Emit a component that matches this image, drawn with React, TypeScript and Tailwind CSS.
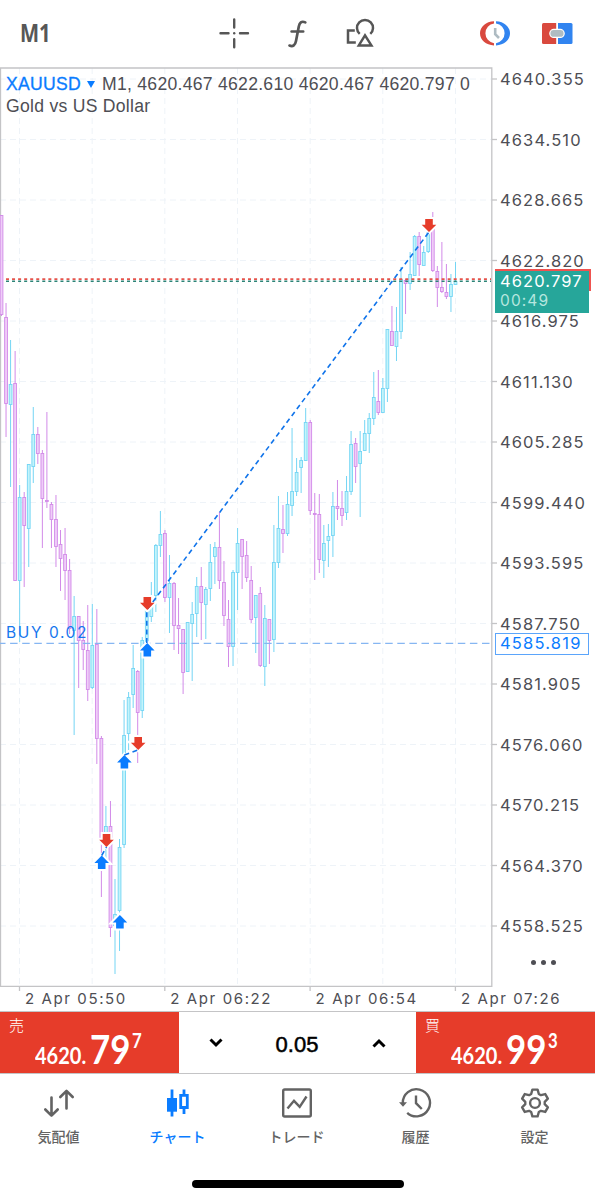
import { ReactNode } from "react";

type Candle = ["u" | "d", number, number, number, number];

// direction, high, body top, body bottom, low
const candles: Candle[] = [
  ["d", 215, 215, 314, 316], ["d", 303, 317, 403, 437], ["u", 340, 384, 404, 487], ["d", 351, 383, 580, 581],
  ["u", 485, 497, 580, 642], ["d", 492, 497, 525, 587], ["u", 464, 464, 528, 567], ["u", 407, 434, 466, 483],
  ["d", 427, 434, 453, 464], ["d", 450, 453, 498, 548], ["d", 412, 500, 501, 508], ["d", 502, 504, 519, 548],
  ["d", 495, 519, 546, 567], ["d", 530, 544, 558, 591], ["d", 528, 554, 570, 600], ["d", 559, 570, 628, 634],
  ["u", 596, 616, 630, 735], ["d", 616, 616, 640, 688], ["d", 621, 640, 649, 670], ["d", 605, 650, 689, 701],
  ["u", 604, 645, 687, 689], ["d", 609, 644, 738, 764], ["d", 736, 738, 842, 897], ["u", 806, 826, 840, 858],
  ["d", 801, 826, 927, 937], ["u", 879, 914, 925, 974], ["u", 839, 847, 910, 951], ["u", 700, 735, 844, 848],
  ["u", 692, 697, 733, 750], ["u", 645, 668, 694, 708], ["d", 670, 671, 712, 763], ["u", 637, 640, 710, 718],
  ["u", 606, 609, 641, 643], ["u", 582, 606, 616, 622], ["u", 544, 545, 595, 612], ["u", 511, 534, 545, 557],
  ["d", 530, 533, 597, 602], ["u", 555, 583, 597, 633], ["d", 582, 583, 625, 650], ["d", 598, 625, 628, 654],
  ["d", 629, 629, 672, 694], ["u", 622, 622, 671, 671], ["u", 602, 614, 623, 681], ["u", 577, 586, 613, 637],
  ["d", 567, 586, 602, 640], ["u", 587, 589, 604, 639], ["u", 544, 562, 588, 601], ["u", 542, 547, 556, 584],
  ["d", 512, 547, 580, 589], ["d", 561, 582, 615, 626], ["d", 600, 619, 646, 667], ["u", 570, 572, 646, 666],
  ["u", 528, 543, 572, 610], ["d", 539, 539, 556, 589], ["d", 541, 555, 577, 582], ["d", 566, 580, 619, 623],
  ["u", 595, 595, 617, 653], ["d", 587, 593, 665, 667], ["u", 605, 618, 666, 686], ["d", 619, 619, 640, 664],
  ["u", 525, 562, 639, 652], ["u", 496, 528, 562, 568], ["d", 505, 529, 533, 553], ["u", 492, 504, 533, 536],
  ["u", 428, 491, 505, 516], ["u", 458, 472, 491, 496], ["u", 457, 460, 467, 493], ["u", 408, 422, 460, 461],
  ["d", 420, 422, 510, 515], ["d", 493, 513, 514, 580], ["d", 494, 514, 559, 573], ["u", 525, 543, 560, 578],
  ["u", 524, 536, 540, 567], ["u", 492, 506, 535, 557], ["d", 480, 506, 508, 520], ["d", 491, 508, 515, 526],
  ["u", 476, 491, 512, 520], ["u", 431, 444, 491, 495], ["d", 438, 443, 466, 483], ["u", 431, 451, 463, 517],
  ["u", 420, 433, 450, 451], ["u", 413, 418, 433, 453], ["u", 372, 397, 418, 425], ["d", 370, 401, 412, 415],
  ["u", 378, 388, 412, 413], ["u", 329, 329, 388, 402], ["d", 306, 331, 345, 346], ["u", 307, 331, 346, 361],
  ["u", 267, 279, 331, 339], ["d", 279, 280, 283, 314], ["u", 252, 274, 283, 290], ["u", 235, 236, 275, 276],
  ["d", 232, 236, 264, 276], ["u", 246, 252, 265, 265], ["u", 226, 226, 251, 253], ["d", 212, 226, 270, 272],
  ["d", 266, 271, 287, 307], ["d", 242, 287, 291, 293], ["d", 264, 292, 296, 299], ["u", 274, 284, 296, 312],
  ["u", 262, 281, 284, 285],
];

const prices = [
  "4640.355", "4634.510", "4628.665", "4622.820", "4616.975", "4611.130", "4605.285", "4599.440",
  "4593.595", "4587.750", "4581.905", "4576.060", "4570.215", "4564.370", "4558.525",
];

const times = ["2 Apr 05:50", "2 Apr 06:22", "2 Apr 06:54", "2 Apr 07:26"];

const sells = [[106.5, 847], [138.2, 750], [147.3, 610], [429, 232]];
const buys = [[101.7, 855.5], [119.9, 915], [124.4, 755], [147.3, 643]];

function Chart() {
  return (
    <svg width="498" height="925" viewBox="0 67 498 925" className="block">
      <g stroke="#eef3f8" strokeWidth="1">
        {prices.map((p, i) => (
          <line key={p} x1="0" x2="491" y1={79 + i * 60.5} y2={79 + i * 60.5} strokeDasharray="6 4" />
        ))}
        {[0, 1, 2, 3, 4, 5, 6].map((i) => (
          <line key={i} x1={19.5 + i * 72.66} x2={19.5 + i * 72.66} y1="68" y2="986" strokeDasharray="6 4" />
        ))}
      </g>
      <g stroke="#c4c4c6" strokeWidth="1.3">
        {prices.map((p, i) => (
          <line key={p} x1="492" x2="497" y1={79 + i * 60.5} y2={79 + i * 60.5} />
        ))}
        {times.map((t, i) => (
          <line key={t} x1={19.5 + i * 145.3} x2={19.5 + i * 145.3} y1="986" y2="991" />
        ))}
        <path d="M0.5 986.3 V68 H491.8 V986.3 Z" fill="none" />
      </g>

      {candles.map(([dir, high, top, bottom, low], i) => {
        const x = 1.5 + i * 4.54;
        const color = dir === "u" ? "#74d5f4" : "#d28ae8";
        return (
          <g key={i} stroke={color}>
            <line x1={x} x2={x} y1={high} y2={low} strokeWidth="1" />
            <rect
              x={x - 1.4}
              y={top + 0.5}
              width="2.8"
              height={Math.max(bottom - top, 0.3)}
              fill={dir === "u" ? "#c3f4fb" : "#efcdf8"}
              strokeWidth="0.9"
            />
          </g>
        );
      })}

      <line x1="0" x2="491" y1="643.4" y2="643.4" stroke="#86b6f2" strokeWidth="1.1" strokeDasharray="7.5 4.6" strokeDashoffset="2" />
      <line x1="6" x2="491" y1="279.2" y2="279.2" stroke="#e5534b" strokeWidth="1.8" strokeDasharray="3 3.05" />
      <line x1="6" x2="491" y1="281.2" y2="281.2" stroke="#2c8376" strokeWidth="1.4" strokeDasharray="3 3.05" />

      <g fill="#fff" stroke="#fff" strokeWidth="4">
        {sells.map(([x, y]) => (
          <path key={x} d={`M${x} ${y} l-7.3 -7.3 h3.5 v-5.7 h7.6 v5.7 h3.5 Z`} />
        ))}
        {buys.map(([x, y]) => (
          <path key={x} d={`M${x} ${y} l-7.3 7.6 h3.5 v6 h7.6 v-6 h3.5 Z`} />
        ))}
      </g>
      <g stroke="#0f73ea" strokeWidth="1.6" strokeDasharray="5 3.6" fill="none">
        <path d="M146.8 643 V610 L429 232" />
        <path d="M124.4 755 L138.2 750" />
        <path d="M101.7 855.5 L106.5 847" />
      </g>
      <g fill="#e63c2a">
        {sells.map(([x, y]) => (
          <path key={x} d={`M${x} ${y} l-7.3 -7.3 h3.5 v-5.7 h7.6 v5.7 h3.5 Z`} />
        ))}
      </g>
      <g fill="#0a7cff">
        {buys.map(([x, y]) => (
          <path key={x} d={`M${x} ${y} l-7.3 7.6 h3.5 v6 h7.6 v-6 h3.5 Z`} />
        ))}
      </g>
    </svg>
  );
}

function Header() {
  return (
    <div className="flex h-[67px] items-start pl-5 font-['Open_Sans',sans-serif]">
      <div className="w-[195px] pt-4 text-[25px] leading-8 font-bold text-[#575757]">
        <span className="inline-block origin-left scale-x-[0.81]">M1</span>
      </div>
      <svg width="380" height="66" viewBox="215 0 380 66" fill="none" className="shrink-0">
        <g stroke="#565656" strokeWidth="2.4" strokeLinecap="round">
          <path d="M220.5 33.3 H228.5 M240 33.3 H248 M234.2 19.5 V27.5 M234.2 39.3 V47.3" />
          <path d="M234.2 33.3 h0.01" />
          <path d="M305.3 22.4 C301.5 20.6 299.5 22.8 298.8 26.5 L296 41 C295.2 45.2 293 47 289.5 45.6 M291.6 31.5 H303.2" strokeWidth="2.7" />
        </g>
        <g stroke="#565656" strokeWidth="2.5">
          <path d="M359.7 33.9 A8 8 0 1 1 370.3 33.9" />
          <path d="M365 35.3 L358.8 45.4 H371.4 Z" />
          <path d="M354.8 30.4 H348 V42.5 H355.8" />
        </g>
        <path d="M494 21.2 C486 21.6 480 26.5 480 33.3 S486 45 494 45.4 V43.2 A10 10 0 0 1 494 23.4 Z" fill="#d9493e" />
        <path d="M496 21.2 C504 21.6 510 26.5 510 33.3 S504 45 496 45.4 V43.2 A10 10 0 0 0 496 23.4 Z" fill="#3184f0" />
        <path d="M495.2 28 V34.2 L499 38" stroke="#aebbc2" strokeWidth="2.6" />
        <path d="M543.5 23 H556.2 V44 H543.5 Q542 44 542 42.5 V24.5 Q542 23 543.5 23 Z" fill="#d9493e" />
        <path d="M558 23 H571 Q572.5 23 572.5 24.5 V42.5 Q572.5 44 571 44 H558 Z" fill="#3184f0" />
        <rect x="549.8" y="29.4" width="14.4" height="8" rx="4" fill="#b0bcc2" stroke="#fff" strokeWidth="1.2" />
      </svg>
    </div>
  );
}

function Quote({ label, big, sup }: { label: string; big: string; sup: string }) {
  return (
    <div className="flex w-[179px] flex-col bg-[#e63c2a] text-white">
      <div className="h-[17px] pt-[5px] pl-[9px] font-['Noto_Sans_CJK_JP',sans-serif] text-[15px] leading-[15px] font-light">{label}</div>
      <div className="flex h-[42px] items-baseline pl-[35px] font-['Lato',sans-serif] leading-[40px] font-bold">
        <div className="w-[55px] text-[23px]">
          <span className="inline-block origin-left scale-x-[0.87]">4620.</span>
        </div>
        <div className="w-[42px] text-[41px]">
          <span className="inline-block origin-left scale-x-[0.85]">{big}</span>
        </div>
        <div className="text-[21px]">
          <span className="relative -top-4 inline-block origin-left scale-x-[0.8]">{sup}</span>
        </div>
      </div>
    </div>
  );
}

function Tab({ label, active, children }: { label: string; active?: boolean; children: ReactNode }) {
  return (
    <div className={active ? "flex w-[119px] flex-col items-center text-[#0a7cff]" : "flex w-[119px] flex-col items-center text-[#636363]"}>
      <svg width="34" height="34" viewBox="-17 -17 34 34" fill="none" stroke="currentColor" strokeWidth="2.4">
        {children}
      </svg>
      <div className="mt-[6px] text-[14px] leading-5 font-medium">{label}</div>
    </div>
  );
}

function gearPath() {
  const pts: string[] = [];
  for (let i = 0; i < 6; i++) {
    for (const [off, r] of [[-23, 9.8], [-13, 13.6], [13, 13.6], [23, 9.8]]) {
      const a = ((i * 60 + (r > 10 ? off * 0.85 : off)) * Math.PI) / 180;
      pts.push(`${(r * Math.sin(a)).toFixed(2)} ${(-r * Math.cos(a)).toFixed(2)}`);
    }
  }
  return `M${pts.join(" L")} Z`;
}

export default function App() {
  return (
    <div className="flex h-[1200px] w-[595px] flex-col overflow-hidden bg-white">
      <Header />

      <div className="relative flex h-[919px] font-['Inter',sans-serif] text-[#4e4e54]">
        <Chart />
        <div className="flex h-[869px] flex-col justify-between pt-[2px] pl-[2px] text-[16.5px] leading-5 tracking-[1.1px]">
          {prices.map((p) => (
            <div key={p}>{p}</div>
          ))}
        </div>
        <div className="absolute top-[6px] left-[6px] font-['Liberation_Sans',sans-serif] text-[17.6px] leading-[22px] tracking-[0.27px] whitespace-nowrap">
          <div className="flex items-center">
            <span className="w-[81px] text-[#0a7cff] [-webkit-text-stroke:0.3px_#0a7cff]">XAUUSD</span>
            <svg width="8" height="7" className="mr-[7px]">
              <path d="M0 0 H8 L4 7 Z" fill="#0a7cff" />
            </svg>
            <span>M1, 4620.467 4622.610 4620.467 4620.797 0</span>
          </div>
          <div>Gold vs US Dollar</div>
        </div>
        <div className="absolute top-[556px] left-[6px] text-[15.5px] leading-5 tracking-[1.6px] text-[#1677ee]">BUY 0.02</div>
        <div className="absolute top-[202px] left-[495px] h-[22px] w-[96px] bg-[#ef5350]"></div>
        <div className="absolute top-[204px] left-[495px] h-[42px] w-[94px] bg-[#26a69a] pl-[5px] text-[16.5px] leading-5 tracking-[1.1px] text-white">
          <div>4620.797</div>
          <div className="text-[15.5px] text-[#b5e6df]">00:49</div>
        </div>
        <div className="absolute top-[566px] left-[495px] h-[22px] w-[94px] border border-[#5ba5fb] bg-white pl-[4px] text-[16.5px] leading-[19px] tracking-[1.2px] text-[#0a7cff]">
          4585.819
        </div>
        <div className="absolute top-[893px] left-[531px] flex gap-[5px]">
          <div className="size-[5px] rounded-full bg-[#4e4e54]"></div>
          <div className="size-[5px] rounded-full bg-[#4e4e54]"></div>
          <div className="size-[5px] rounded-full bg-[#4e4e54]"></div>
        </div>
      </div>

      <div className="flex h-[25px] pt-[3px] pl-[25px] font-['Inter',sans-serif] text-[15px] leading-5 tracking-[1.6px] whitespace-nowrap text-[#4e4e54]">
        {times.map((t) => (
          <div key={t} className="w-[145.3px] shrink-0">{t}</div>
        ))}
      </div>

      <div className="flex h-[63px] border-y border-[#c4c4c6]">
        <Quote label="売" big="79" sup="7" />
        <div className="flex flex-1 items-center justify-between px-[30px]">
          <svg width="14" height="10" fill="none" stroke="#000" strokeWidth="3">
            <path d="M1.5 1.5 L7 7 L12.5 1.5" />
          </svg>
          <div className="pt-1 pr-px font-['Liberation_Sans',sans-serif] text-[22px] [-webkit-text-stroke:0.5px_#000]">0.05</div>
          <svg width="14" height="10" fill="none" stroke="#000" strokeWidth="3">
            <path d="M1.5 8.5 L7 3 L12.5 8.5" />
          </svg>
        </div>
        <Quote label="買" big="99" sup="3" />
      </div>

      <div className="-ml-px flex h-[106px] pt-3 font-['Noto_Sans_CJK_JP',sans-serif]">
        <Tab label="気配値">
          <g strokeWidth="2.6" strokeLinecap="round" strokeLinejoin="round">
            <path d="M-7.5 -5.5 V12.5 M-13.7 6.5 L-7.5 12.7 L-1.3 6.5" />
            <path d="M7.5 5.5 V-12 M1.3 -6 L7.5 -12.2 L13.7 -6" />
          </g>
        </Tab>
        <Tab label="チャート" active>
          <path d="M-6 -13.5 V13.5 M6 -13.5 V-8 M6 5 V11" strokeWidth="2.8" />
          <path d="M-11 -5 H-1 V8.7 H-11 Z" fill="currentColor" stroke="none" />
          <path d="M2.7 -7.7 H9.3 V4.5 H2.7 Z" strokeWidth="2.8" />
        </Tab>
        <Tab label="トレード">
          <rect x="-13.8" y="-13.5" width="27.6" height="27" rx="1.5" />
          <path d="M-9.5 5.5 L-3 -2.2 L2.7 3.8 L9.5 -6.5" />
        </Tab>
        <Tab label="履歴">
          <path d="M-13.2 0 A13.6 13.6 0 1 1 -8.8 9.8" />
          <path d="M-17 -0.7 H-9 L-13 3.8 Z" fill="currentColor" stroke="none" />
          <path d="M0 -7.5 V0.2 L5.8 6" />
        </Tab>
        <Tab label="設定">
          <path d={gearPath()} strokeLinejoin="round" />
          <circle r="4.9" />
        </Tab>
      </div>
      <div className="mx-auto h-2 w-[212px] rounded-full bg-black"></div>
    </div>
  );
}
